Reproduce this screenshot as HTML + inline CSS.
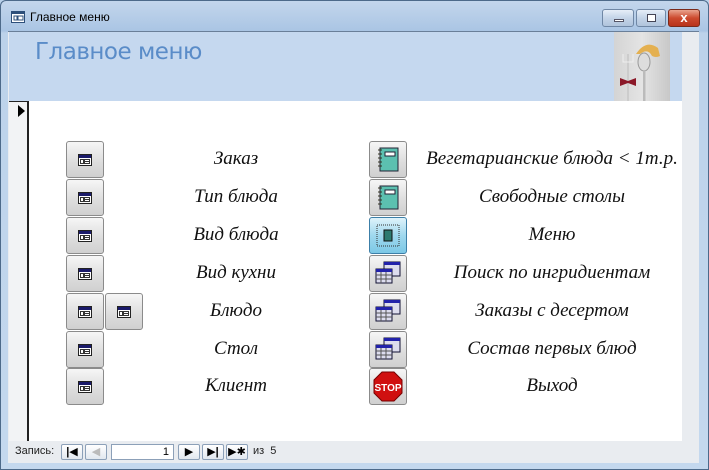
<!DOCTYPE html>
<html><head><meta charset="utf-8"><style>
*{margin:0;padding:0;box-sizing:border-box}
body{width:709px;height:470px;overflow:hidden;background:#b9d1ea;font-family:"Liberation Sans","DejaVu Sans",sans-serif;position:relative}
.a{position:absolute}
.frame{left:0;top:0;width:709px;height:470px;background:linear-gradient(#c3d6ec,#aac5e4 30px,#bcd2ea 32px,#c4d8ee);border:1px solid #4d6a8a;border-radius:6px 6px 0 0}
.title{left:30px;top:10px;font-size:12px;color:#000}
.tb{top:9px;height:18px;border:1px solid #6f87a5;border-radius:3px;background:linear-gradient(#e6eef8,#c4d4e8 50%,#b0c4dc)}
.btn{width:38px;height:37px;border:1px solid #8b8b8b;border-radius:3px;background:linear-gradient(#f6f6f6,#dcdcdc 60%,#d0d0d0)}
.btn .fi{position:absolute;left:11px;top:12px}
.lab{font-family:"Liberation Serif",serif;font-style:italic;font-size:19px;color:#111;text-align:center;white-space:nowrap}
.nb{top:444px;height:16px;border:1px solid #8ca0b8;border-radius:2px;background:linear-gradient(#fff,#e2e8ef);font-size:11px;text-align:center;line-height:14px;font-weight:bold}
</style></head><body>
<svg width="0" height="0" style="position:absolute"><defs><g id="fi"><rect x="0.5" y="0.5" width="13" height="11" fill="#fff" stroke="#222"/><rect x="1" y="1" width="12" height="3" fill="#1a1a6a"/><rect x="2.5" y="5.5" width="3" height="4" fill="none" stroke="#333"/><rect x="6.5" y="5.5" width="5" height="4" fill="none" stroke="#333"/><path d="M7 7.5h4" stroke="#333"/></g></defs></svg>
<div class="a frame"></div>
<svg class="a" style="left:11px;top:11px" width="14" height="12"><rect x="0.5" y="0.5" width="13" height="11" fill="#fff" stroke="#2d4f7a"/><rect x="1" y="1" width="12" height="2" fill="#2d4f7a"/><rect x="3" y="5" width="3" height="4" fill="none" stroke="#2d4f7a"/><rect x="7" y="5" width="5" height="4" fill="none" stroke="#2d4f7a"/></svg>
<div class="a title">Главное меню</div>
<div class="a tb" style="left:602px;width:32px"><div class="a" style="left:11px;top:9px;width:10px;height:3px;background:#fff;border:1px solid #556"></div></div>
<div class="a tb" style="left:636px;width:30px"><div class="a" style="left:10px;top:4px;width:9px;height:8px;border:1px solid #445;background:#fff"></div></div>
<div class="a tb" style="left:668px;width:32px;background:linear-gradient(#e9a48e,#cc4a2e 50%,#b8331b);border-color:#7a2a1a;color:#fff;font-weight:bold;font-size:13px;text-align:center;line-height:15px">x</div>
<div class="a" style="left:8px;top:31px;width:691px;height:432px;background:#e9ecf0;border-top:1px solid #6a7f99"></div>
<div class="a" style="left:9px;top:32px;width:673px;height:69px;background:#c5d8ef"></div>
<div class="a" style="left:35px;top:39px;font-size:23px;color:#5a8cc8;font-family:'DejaVu Sans',sans-serif;letter-spacing:-0.5px">Главное меню</div>
<div class="a" style="left:614px;top:32px;width:56px;height:69px;background:linear-gradient(90deg,#d4d4d4,#e4e4e4,#c8c8c8)"></div>
<svg class="a" style="left:614px;top:32px" width="56" height="69"><rect x="13" y="22" width="2" height="47" fill="#ccc"/><path d="M9 22v8h10v-8" stroke="#eee" fill="none"/><path d="M6 46l8 3 8-3v8l-8-3-8 3z" fill="#8b1828"/><ellipse cx="30" cy="30" rx="6" ry="9" fill="#ddd" stroke="#999"/><rect x="29" y="38" width="2.5" height="31" fill="#bbb"/><path d="M22 22q10-15 22-6l2 8q-4 2-8 0q-4-8-12-2z" fill="#e4b050"/></svg>
<div class="a" style="left:9px;top:101px;width:673px;height:340px;background:#fff"></div>
<div class="a" style="left:9px;top:101px;width:20px;height:340px;background:#f2f3f5;border-right:2px solid #222;border-top:1px solid #222"></div>
<div class="a" style="left:18px;top:105px;width:0;height:0;border-left:7px solid #000;border-top:6px solid transparent;border-bottom:6px solid transparent"></div>

<div class="a btn" style="left:66px;top:141px"><svg class="fi" width="14" height="12"><use href="#fi"/></svg></div>
<div class="a btn" style="left:66px;top:179px"><svg class="fi" width="14" height="12"><use href="#fi"/></svg></div>
<div class="a btn" style="left:66px;top:217px"><svg class="fi" width="14" height="12"><use href="#fi"/></svg></div>
<div class="a btn" style="left:66px;top:255px"><svg class="fi" width="14" height="12"><use href="#fi"/></svg></div>
<div class="a btn" style="left:66px;top:293px"><svg class="fi" width="14" height="12"><use href="#fi"/></svg></div>
<div class="a btn" style="left:105px;top:293px"><svg class="fi" width="14" height="12"><use href="#fi"/></svg></div>
<div class="a btn" style="left:66px;top:331px"><svg class="fi" width="14" height="12"><use href="#fi"/></svg></div>
<div class="a btn" style="left:66px;top:368px"><svg class="fi" width="14" height="12"><use href="#fi"/></svg></div>

<div class="a lab" style="left:140px;width:192px;top:148px">Заказ</div>
<div class="a lab" style="left:140px;width:192px;top:186px">Тип блюда</div>
<div class="a lab" style="left:140px;width:192px;top:224px">Вид блюда</div>
<div class="a lab" style="left:140px;width:192px;top:262px">Вид кухни</div>
<div class="a lab" style="left:140px;width:192px;top:300px">Блюдо</div>
<div class="a lab" style="left:140px;width:192px;top:338px">Стол</div>
<div class="a lab" style="left:140px;width:192px;top:375px">Клиент</div>

<div class="a btn" style="left:369px;top:141px"><svg width="36" height="35"><rect x="10" y="6" width="18" height="23" fill="#5cc0b0" stroke="#223"/><rect x="15" y="10" width="10" height="4" fill="#fff" stroke="#223"/><path d="M8 8h4M8 12h4M8 16h4M8 20h4M8 24h4" stroke="#332"/></svg></div>
<div class="a btn" style="left:369px;top:179px"><svg width="36" height="35"><rect x="10" y="6" width="18" height="23" fill="#5cc0b0" stroke="#223"/><rect x="15" y="10" width="10" height="4" fill="#fff" stroke="#223"/><path d="M8 8h4M8 12h4M8 16h4M8 20h4M8 24h4" stroke="#332"/></svg></div>
<div class="a btn" style="left:369px;top:217px;background:linear-gradient(#dff3fb,#9fd8ee 50%,#7cc8e6);border-color:#3c7fa8"><svg width="36" height="35"><rect x="7" y="7" width="22" height="21" fill="none" stroke="#333" stroke-dasharray="1 1"/><rect x="14" y="12" width="8" height="11" fill="#2d7a70" stroke="#111"/></svg></div>
<div class="a btn" style="left:369px;top:255px"><svg width="36" height="35"><rect x="14" y="6" width="16" height="14" fill="#dde" stroke="#113"/><rect x="14" y="6" width="16" height="3" fill="#22a"/><rect x="6" y="13" width="16" height="14" fill="#dde" stroke="#113"/><rect x="6" y="13" width="16" height="3" fill="#22a"/><path d="M6 19h16M6 23h16M11 16v11M16 16v11" stroke="#555"/></svg></div>
<div class="a btn" style="left:369px;top:293px"><svg width="36" height="35"><rect x="14" y="6" width="16" height="14" fill="#dde" stroke="#113"/><rect x="14" y="6" width="16" height="3" fill="#22a"/><rect x="6" y="13" width="16" height="14" fill="#dde" stroke="#113"/><rect x="6" y="13" width="16" height="3" fill="#22a"/><path d="M6 19h16M6 23h16M11 16v11M16 16v11" stroke="#555"/></svg></div>
<div class="a btn" style="left:369px;top:331px"><svg width="36" height="35"><rect x="14" y="6" width="16" height="14" fill="#dde" stroke="#113"/><rect x="14" y="6" width="16" height="3" fill="#22a"/><rect x="6" y="13" width="16" height="14" fill="#dde" stroke="#113"/><rect x="6" y="13" width="16" height="3" fill="#22a"/><path d="M6 19h16M6 23h16M11 16v11M16 16v11" stroke="#555"/></svg></div>
<div class="a btn" style="left:369px;top:368px"><svg width="36" height="35"><polygon points="12,3 24,3 32,11 32,24 24,32 12,32 4,24 4,11" fill="#d01010" stroke="#700"/><text x="18" y="22" font-family="Liberation Sans" font-weight="bold" font-size="10" fill="#fff" text-anchor="middle">STOP</text></svg></div>

<div class="a lab" style="left:420px;width:264px;top:148px">Вегетарианские блюда &lt; 1т.р.</div>
<div class="a lab" style="left:420px;width:264px;top:186px">Свободные столы</div>
<div class="a lab" style="left:420px;width:264px;top:224px">Меню</div>
<div class="a lab" style="left:420px;width:264px;top:262px">Поиск по ингридиентам</div>
<div class="a lab" style="left:420px;width:264px;top:300px">Заказы с десертом</div>
<div class="a lab" style="left:420px;width:264px;top:338px">Состав первых блюд</div>
<div class="a lab" style="left:420px;width:264px;top:375px">Выход</div>

<div class="a" style="left:15px;top:445px;font-size:11px;color:#222">Запись:</div>
<div class="a nb" style="left:61px;width:22px">|◀</div>
<div class="a nb" style="left:85px;width:22px;color:#bbb">◀</div>
<div class="a" style="left:111px;top:444px;width:63px;height:16px;border:1px solid #8ca0b8;background:#fff;font-size:11px;text-align:right;padding-right:4px;line-height:14px">1</div>
<div class="a nb" style="left:178px;width:22px">▶</div>
<div class="a nb" style="left:202px;width:22px">▶|</div>
<div class="a nb" style="left:226px;width:22px">▶✱</div>
<div class="a" style="left:253px;top:445px;font-size:11px;color:#222">из &nbsp;5</div>
</body></html>
